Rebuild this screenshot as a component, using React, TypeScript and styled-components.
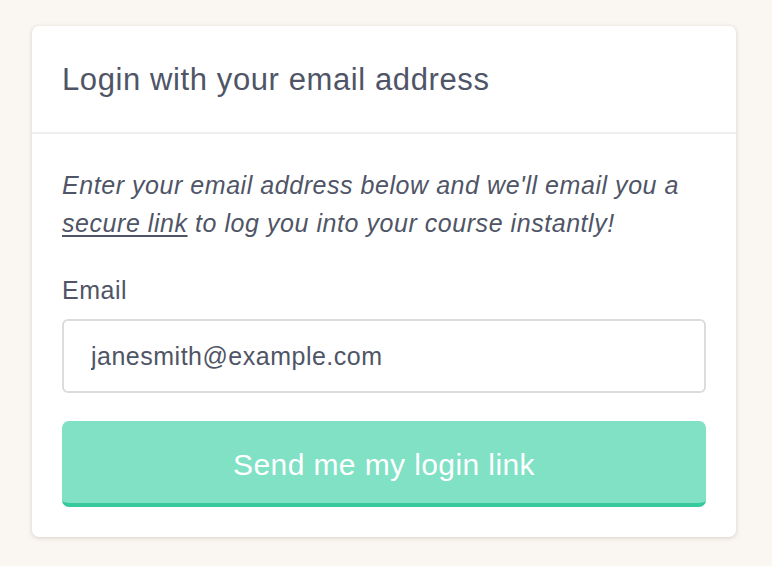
import styled, { createGlobalStyle } from 'styled-components';

const GlobalStyle = createGlobalStyle`
  html, body {
    margin: 0;
    padding: 0;
    background: #faf6f1;
  }
  body {
    font-family: "Liberation Sans", Arial, sans-serif;
    color: #4f5566;
  }
`;

const Page = styled.div`
  padding: 26px 36px 28px 32px;
`;

const Card = styled.div`
  background: #ffffff;
  border-radius: 7px;
  box-shadow: 0 1px 4px rgba(120, 100, 80, 0.25);
  overflow: hidden;
`;

const CardHeader = styled.div`
  padding: 38px 30px 36px;
  border-bottom: 2px solid #efefef;
`;

const Title = styled.h1`
  margin: 0;
  font-size: 31px;
  line-height: 32px;
  letter-spacing: 0.6px;
  font-weight: normal;
  color: #4f5566;
`;

const CardBody = styled.div`
  padding: 32px 30px 30px;
`;

const Intro = styled.p`
  margin: 0 0 33px;
  font-size: 25px;
  line-height: 38px;
  letter-spacing: 0.55px;
  font-style: italic;
  color: #4f5566;

  a {
    color: inherit;
    text-decoration: underline;
    text-underline-offset: 3px;
  }
`;

const Label = styled.label`
  display: block;
  font-size: 25px;
  line-height: 30px;
  letter-spacing: 0.5px;
  margin-bottom: 14px;
`;

const Input = styled.input`
  display: block;
  box-sizing: border-box;
  width: 100%;
  height: 74px;
  padding: 0 27px;
  border: 2px solid #dcdcdc;
  border-radius: 6px;
  font-family: "Liberation Sans", Arial, sans-serif;
  font-size: 25px;
  letter-spacing: 0.5px;
  color: #4f5566;
  outline: none;
  margin-bottom: 28px;
`;

const SubmitButton = styled.button`
  display: block;
  box-sizing: border-box;
  width: 100%;
  height: 86px;
  padding: 5px 0 0;
  border: none;
  border-bottom: 4px solid #36c99b;
  border-radius: 7px;
  background: #80e1c5;
  color: #ffffff;
  font-family: "Liberation Sans", Arial, sans-serif;
  font-size: 30px;
  letter-spacing: 0.4px;
  cursor: pointer;
`;

export default function App() {
  return (
    <>
      <GlobalStyle />
      <Page>
        <Card>
          <CardHeader>
            <Title>Login with your email address</Title>
          </CardHeader>
          <CardBody>
            <Intro>
              Enter your email address below and we'll email you a <a href="#">secure link</a> to
              log you into your course instantly!
            </Intro>
            <Label htmlFor="email">Email</Label>
            <Input id="email" type="email" defaultValue="janesmith@example.com" />
            <SubmitButton type="button">Send me my login link</SubmitButton>
          </CardBody>
        </Card>
      </Page>
    </>
  );
}
